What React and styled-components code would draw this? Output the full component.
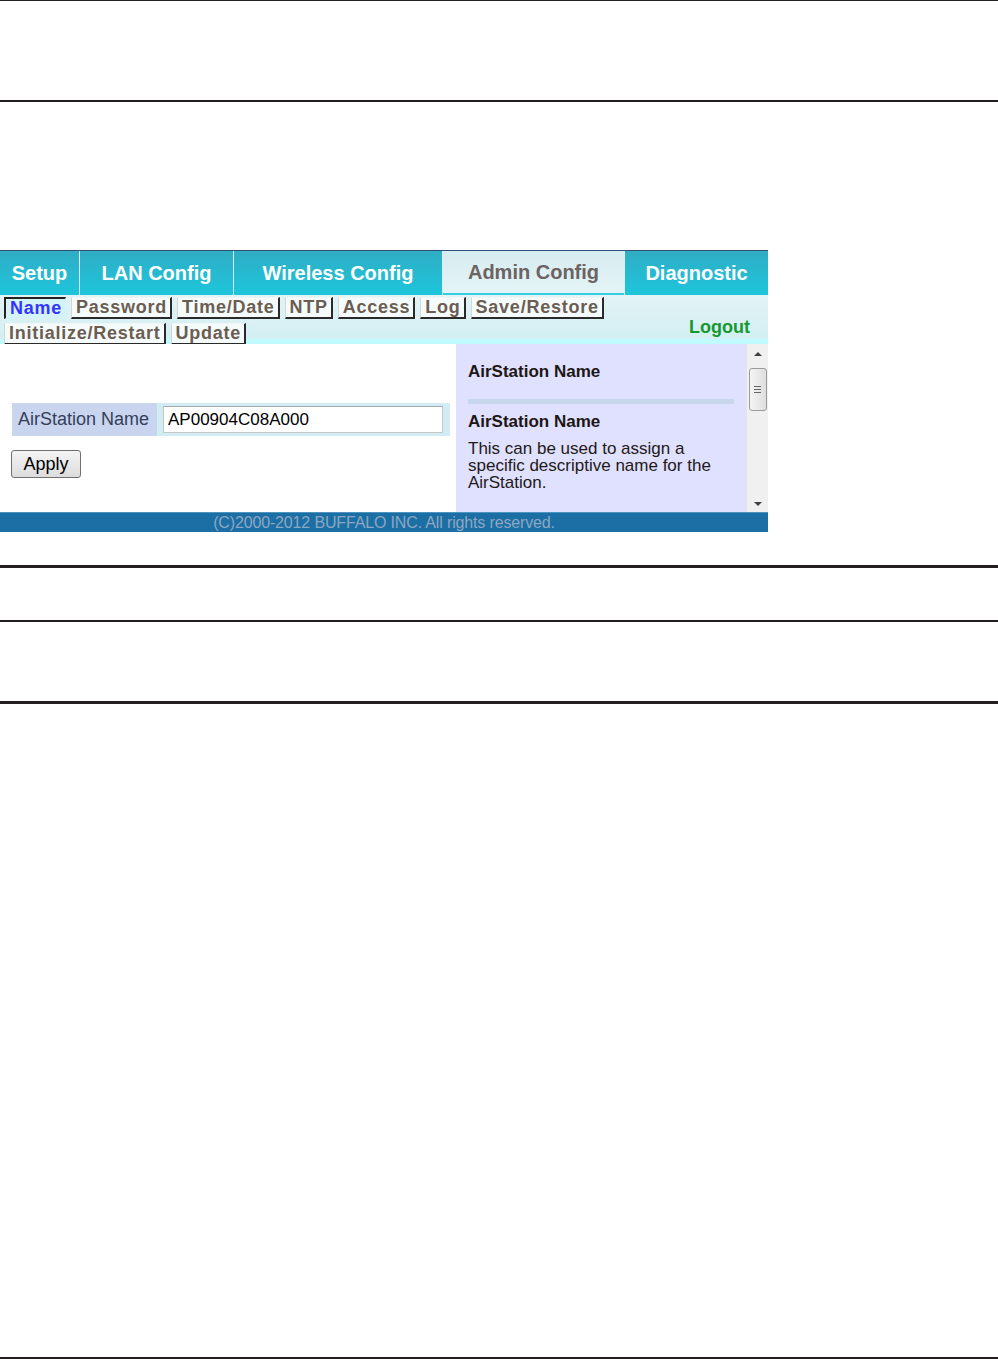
import React from 'react';
import styled, { createGlobalStyle } from 'styled-components';

const Global = createGlobalStyle`
  html, body { margin: 0; padding: 0; background: #fff; }
  body { font-family: "Liberation Sans", Arial, sans-serif; }
  * { box-sizing: border-box; }
`;

const Page = styled.div`
  width: 998px;
  min-height: 1359px;
  display: flex;
  flex-direction: column;
`;

const Rule = styled.div`
  flex: none;
  margin-top: ${p => p.$gap}px;
  height: ${p => p.$thick}px;
  width: ${p => p.$w || 998}px;
  background: #231f20;
`;

const Shot = styled.div`
  flex: none;
  margin-top: ${p => p.$gap}px;
  width: 768px;
  display: flex;
  flex-direction: column;
  border-top: 1px solid #2d4f78;
`;

const TabBar = styled.div`
  display: grid;
  grid-template-columns: 79px 153px 208px 181px 143px;
  column-gap: 1px;
  height: 44px;
  background: #d9f1f5;
`;

const Tab = styled.div`
  display: flex;
  align-items: center;
  justify-content: center;
  font-weight: bold;
  font-size: 20px;
  color: ${p => (p.$active ? '#6c6362' : '#ffffff')};
  background: ${p =>
    p.$active
      ? 'linear-gradient(#d6ecf0, #e4f4f6)'
      : 'linear-gradient(#2fadc4, #1dc6dc)'};
  border-bottom: ${p => (p.$active ? '2px solid #34cfe4' : '0')};
`;

const SubNav = styled.div`
  height: 49px;
  display: flex;
  justify-content: space-between;
  align-items: flex-start;
  padding: 2px 18px 0 4px;
  background: linear-gradient(#e3f3f5 0%, #d3eff3 88%, #c0fbff 92%, #c0fbff 100%);
`;

const SubTabs = styled.div`
  width: 620px;
  display: flex;
  flex-wrap: wrap;
  column-gap: 5px;
  row-gap: 4px;
`;

const SubTab = styled.span`
  height: 22px;
  display: flex;
  align-items: center;
  padding: 0 3px 0 4px;
  font-weight: bold;
  font-size: 18px;
  letter-spacing: 0.75px;
  color: ${p => (p.$active ? '#3434ff' : '#6b5d52')};
  background: ${p => (p.$active ? '#d4f3f7' : '#f5fbfb')};
  border-style: solid;
  border-width: ${p => (p.$active ? '2px 1px 1px 2px' : '1px 2px 2px 1px')};
  border-color: ${p =>
    p.$active ? '#222 #d4f3f7 #d4f3f7 #222' : '#eef6f6 #2a2a2a #2a2a2a #d0d8d8'};
`;

const Logout = styled.span`
  margin-top: 20px;
  font-weight: bold;
  font-size: 18px;
  color: #15982f;
`;

const Content = styled.div`
  height: 168px;
  display: grid;
  grid-template-columns: 456px 290px 22px;
`;

const FormPane = styled.div`
  background: #fff;
  padding: 59px 0 0 12px;
  display: flex;
  flex-direction: column;
  align-items: flex-start;
`;

const FieldRow = styled.div`
  display: grid;
  grid-template-columns: 145px 293px;
  height: 33px;
`;

const FieldLabel = styled.div`
  display: flex;
  align-items: center;
  padding-left: 6px;
  background: #c9d5ef;
  color: #34405a;
  font-size: 18px;
`;

const FieldCell = styled.div`
  background: #d2ecf4;
  padding: 3px 7px 3px 6px;
`;

const TextInput = styled.input`
  width: 100%;
  height: 27px;
  border: 1px solid #c6c6c6;
  border-top-color: #a8a8a8;
  background: #fff;
  padding: 0 4px;
  font-family: "Liberation Sans", Arial, sans-serif;
  font-size: 17px;
  color: #000;
  outline: none;
`;

const Button = styled.button`
  margin-top: 14px;
  margin-left: -1px;
  width: 70px;
  height: 28px;
  border: 1px solid #707070;
  border-radius: 3px;
  background: linear-gradient(#f4f4f4, #dcdcdc);
  font-family: "Liberation Sans", Arial, sans-serif;
  font-size: 18px;
  color: #000;
  padding: 0;
`;

const HelpPane = styled.div`
  background: #e0e0ff;
  padding: 18px 12px 0 12px;
  overflow: hidden;
`;

const HelpTitle = styled.div`
  font-weight: bold;
  font-size: 17px;
  line-height: 20px;
  color: #1c1712;
  margin-top: ${p => p.$gap || 0}px;
`;

const HelpDivider = styled.div`
  margin-top: 17px;
  height: 5px;
  background: #c8d6ee;
`;

const HelpText = styled.p`
  margin: 8px 0 0;
  font-size: 17px;
  line-height: 17px;
  color: #221a16;
`;

const Scrollbar = styled.div`
  background: #f0f0f0;
  border-left: 1px solid #e4e4e4;
  display: flex;
  flex-direction: column;
  align-items: center;
  padding: 8px 0 6px;
`;

const Arrow = styled.div`
  width: 0;
  height: 0;
  border-left: 4px solid transparent;
  border-right: 4px solid transparent;
  ${p => (p.$down ? 'border-top: 4px solid #404040;' : 'border-bottom: 4px solid #404040;')}
  ${p => (p.$down ? 'margin-top: auto;' : '')}
`;

const Thumb = styled.div`
  margin-top: 12px;
  width: 18px;
  height: 43px;
  border: 1px solid #9a9a9a;
  border-radius: 3px;
  background: linear-gradient(90deg, #f4f4f4, #dedede);
  display: flex;
  flex-direction: column;
  align-items: center;
  justify-content: center;
  gap: 2px;
`;

const Grip = styled.div`
  width: 7px;
  height: 1px;
  background: #666;
`;

const Footer = styled.div`
  height: 20px;
  background: #1b6fa4;
  border-top: 1px solid #4f93bf;
  display: flex;
  align-items: center;
  justify-content: center;
  font-size: 16px;
  letter-spacing: -0.15px;
  color: #8ea6c1;
`;

const mainTabs = [
  { label: 'Setup' },
  { label: 'LAN Config' },
  { label: 'Wireless Config' },
  { label: 'Admin Config', active: true },
  { label: 'Diagnostic' },
];

const subTabs = [
  { label: 'Name', active: true },
  { label: 'Password' },
  { label: 'Time/Date' },
  { label: 'NTP' },
  { label: 'Access' },
  { label: 'Log' },
  { label: 'Save/Restore' },
  { label: 'Initialize/Restart' },
  { label: 'Update' },
];

export default function App() {
  return (
    <>
      <Global />
      <Page>
        <Rule $gap={0} $thick={1} />
        <Rule $gap={99} $thick={2} />
        <Shot $gap={148}>
          <TabBar>
            {mainTabs.map(t => (
              <Tab key={t.label} $active={t.active}>{t.label}</Tab>
            ))}
          </TabBar>
          <SubNav>
            <SubTabs>
              {subTabs.map(t => (
                <SubTab key={t.label} $active={t.active}>{t.label}</SubTab>
              ))}
            </SubTabs>
            <Logout>Logout</Logout>
          </SubNav>
          <Content>
            <FormPane>
              <FieldRow>
                <FieldLabel>AirStation Name</FieldLabel>
                <FieldCell>
                  <TextInput defaultValue="AP00904C08A000" />
                </FieldCell>
              </FieldRow>
              <Button>Apply</Button>
            </FormPane>
            <HelpPane>
              <HelpTitle>AirStation Name</HelpTitle>
              <HelpDivider />
              <HelpTitle $gap={8}>AirStation Name</HelpTitle>
              <HelpText>
                This can be used to assign a specific descriptive name for the AirStation.
              </HelpText>
            </HelpPane>
            <Scrollbar>
              <Arrow />
              <Thumb>
                <Grip />
                <Grip />
                <Grip />
              </Thumb>
              <Arrow $down />
            </Scrollbar>
          </Content>
          <Footer>(C)2000-2012 BUFFALO INC. All rights reserved.</Footer>
        </Shot>
        <Rule $gap={33} $thick={3} />
        <Rule $gap={52} $thick={2} />
        <Rule $gap={79} $thick={3} />
        <Rule $gap={653} $thick={2} />
      </Page>
    </>
  );
}
